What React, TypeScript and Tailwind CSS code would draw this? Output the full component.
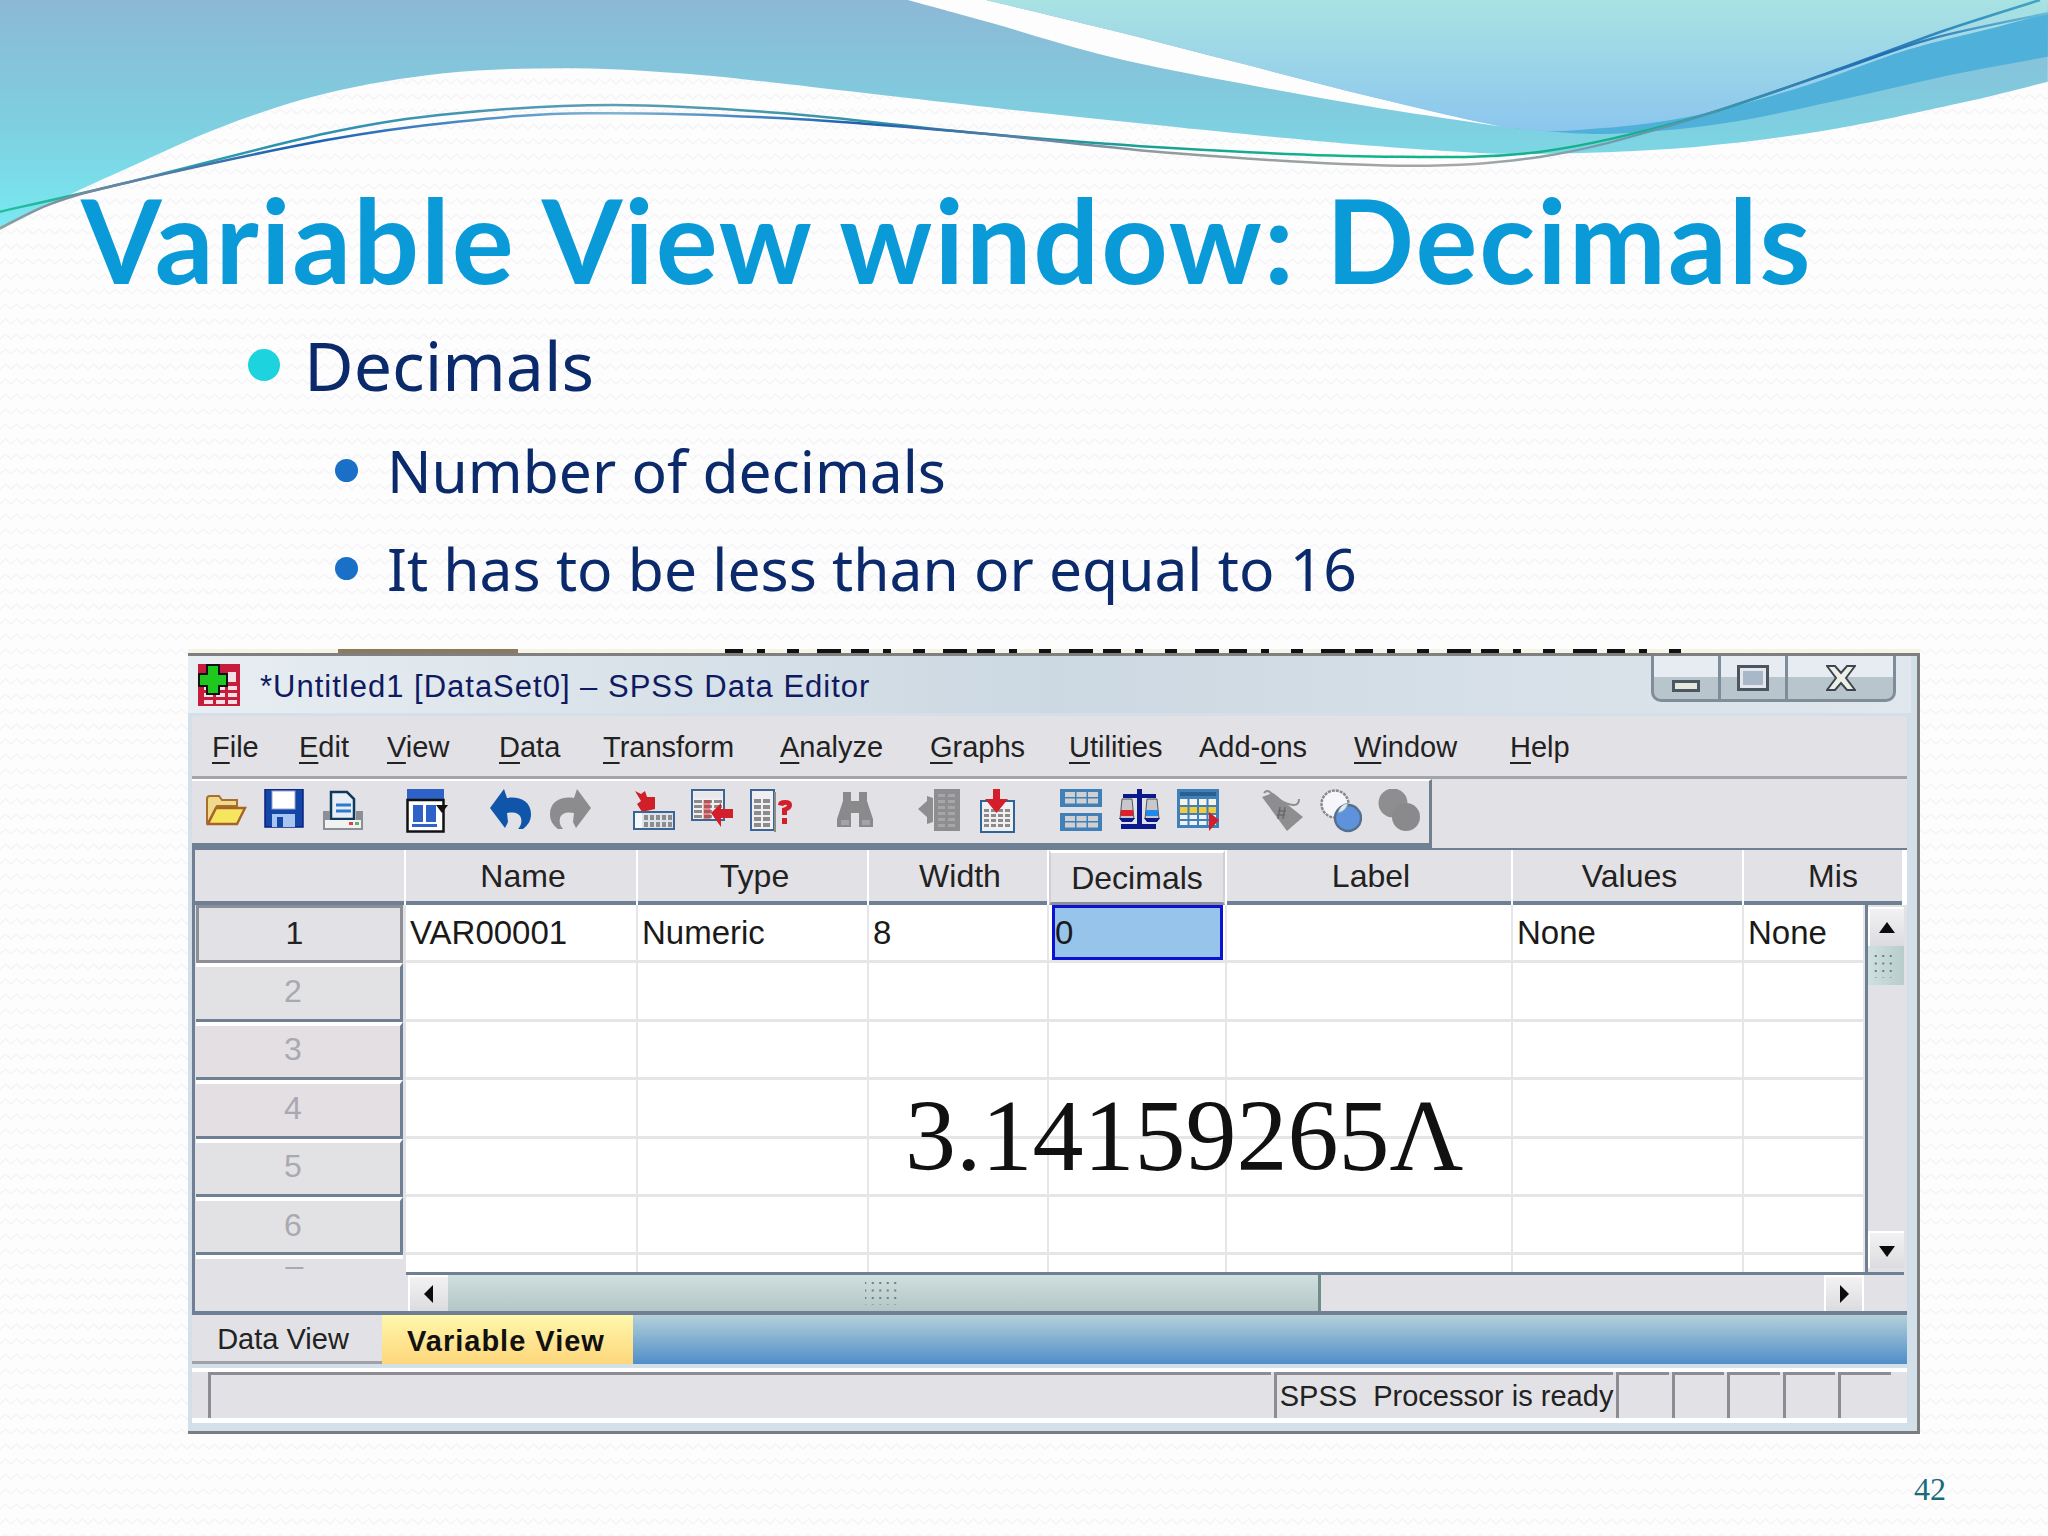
import type { ReactNode } from "react"

const Z = (pts: number[][]) => pts.map(([x, y]) => [x * 1.306, y / 3])

// catmull-rom through the traced points
function smooth(pts: number[][]) {
  let d = ""
  for (let i = 0; i < pts.length - 1; i++) {
    const p0 = pts[Math.max(i - 1, 0)]
    const p1 = pts[i]
    const p2 = pts[i + 1]
    const p3 = pts[Math.min(i + 2, pts.length - 1)]
    const c1 = [p1[0] + (p2[0] - p0[0]) / 6, p1[1] + (p2[1] - p0[1]) / 6]
    const c2 = [p2[0] - (p3[0] - p1[0]) / 6, p2[1] - (p3[1] - p1[1]) / 6]
    d += (i === 0 ? "M" + p1[0] + " " + p1[1] : "") + "C" + c1.join(" ") + " " + c2.join(" ") + " " + p2.join(" ")
  }
  return d
}

const waveEdge = Z([[0,690],[50,590],[100,500],[170,380],[250,280],[340,220],[430,205],[520,220],[620,260],[800,340],[1000,420],[1130,458],[1200,460],[1300,440],[1400,390],[1500,310],[1568,245]])
const streakA = Z([[695,0],[760,70],[850,170],[950,250],[1050,320],[1150,380]])
const streakB = Z([[1150,380],[1050,290],[950,190],[850,90],[755,0]])
const lightEdge = Z([[755,0],[850,90],[950,190],[1050,290],[1160,385],[1225,385],[1300,345],[1380,260],[1460,150],[1530,80],[1568,40]])
const bandEdge = Z([[1160,385],[1230,402],[1320,370],[1420,290],[1500,220],[1568,170]])
const lineA = Z([[0,635],[100,545],[250,400],[350,340],[470,315],[600,340],[750,400],[900,445],[1060,470],[1180,455],[1300,350],[1420,190],[1490,90],[1562,0]])
const lineB = Z([[0,685],[40,610],[100,545],[250,420],[350,365],[450,340],[600,355],[750,400],[900,460],[1070,497],[1180,470],[1280,375],[1400,220],[1480,115],[1568,40]])

function Background() {
  return (
    <svg className="absolute inset-0 h-[1536px] w-[2048px]" viewBox="0 0 2048 1536">
      <defs>
        <linearGradient id="main" x1="0" y1="0" x2="0" y2="232" gradientUnits="userSpaceOnUse">
          <stop offset="0" stopColor="#8cb8d6" />
          <stop offset="0.55" stopColor="#7ed0e0" />
          <stop offset="1" stopColor="#78eaf3" />
        </linearGradient>
        <linearGradient id="light" x1="0" y1="0" x2="0" y2="130" gradientUnits="userSpaceOnUse">
          <stop offset="0" stopColor="#a9e2e2" />
          <stop offset="1" stopColor="#8cc6ee" />
        </linearGradient>
        <linearGradient id="strokeA" x1="0" y1="0" x2="2048" y2="0" gradientUnits="userSpaceOnUse">
          <stop offset="0" stopColor="#1fbf97" />
          <stop offset="0.15" stopColor="#2b8fb0" />
          <stop offset="0.3" stopColor="#5f9db4" />
          <stop offset="0.48" stopColor="#1f8f9f" />
          <stop offset="0.65" stopColor="#12b48a" />
          <stop offset="0.83" stopColor="#14b08e" />
          <stop offset="0.9" stopColor="#1f70b4" />
          <stop offset="1" stopColor="#43a8c8" />
        </linearGradient>
        <linearGradient id="strokeB" x1="0" y1="0" x2="2048" y2="0" gradientUnits="userSpaceOnUse">
          <stop offset="0" stopColor="#9a9a9a" />
          <stop offset="0.15" stopColor="#1a5fb4" />
          <stop offset="0.3" stopColor="#7fb4d2" />
          <stop offset="0.42" stopColor="#1c5fb0" />
          <stop offset="0.56" stopColor="#8f9a9c" />
          <stop offset="0.72" stopColor="#a8a8a8" />
          <stop offset="0.85" stopColor="#3f8fb0" />
          <stop offset="0.92" stopColor="#1f6ab4" />
          <stop offset="1" stopColor="#6cbcd4" />
        </linearGradient>
        <pattern id="zig" width="11" height="15" patternUnits="userSpaceOnUse">
          <path d="M0 9 L5.5 4 L11 9" fill="none" stroke="#f3f3f5" strokeWidth="1.2" />
        </pattern>
      </defs>
      <rect width="2048" height="1536" fill="#fdfdfe" />
      <rect width="2048" height="1536" fill="url(#zig)" />
      <path d={smooth(waveEdge) + "L2048 0L0 0Z"} fill="url(#main)" />
      <path d={smooth(bandEdge) + "L2048 0L1515 0Z"} fill="#4fb0da" />
      <path d={smooth(streakA) + smooth(streakB).replace("M", "L") + "Z"} fill="#fdfdfe" />
      <path d={smooth(lightEdge) + "L2048 0Z"} fill="url(#light)" />
      <path d={smooth(lineA)} fill="none" stroke="url(#strokeA)" strokeWidth="2.5" />
      <path d={smooth(lineB)} fill="none" stroke="url(#strokeB)" strokeWidth="2.5" />
    </svg>
  )
}

function Ico({ children }: { children: ReactNode }) {
  return (
    <svg className="h-[44px] w-[42px] shrink-0" viewBox="0 0 42 44">
      {children}
    </svg>
  )
}

// little spreadsheet used by several toolbar icons
function Cells({ x, y, cols, rows, w, h, fill, gap = 2 }: { x: number; y: number; cols: number; rows: number; w: number; h: number; fill: string; gap?: number }) {
  const out = []
  for (let r = 0; r < rows; r++) {
    for (let c = 0; c < cols; c++) {
      out.push(<rect key={r + "-" + c} x={x + c * (w + gap)} y={y + r * (h + gap)} width={w} height={h} fill={fill} />)
    }
  }
  return <>{out}</>
}

const Folder = () => (
  <Ico>
    <path d="M2 34V10q0-3 3-3h9l3 4h15v6H12L3 34Z" fill="#f0d98a" stroke="#a8702c" strokeWidth="2" />
    <path d="M3 35l8-16h29l-8 16Z" fill="#f6e65e" stroke="#a8622c" strokeWidth="2.4" />
  </Ico>
)
const Save = () => (
  <Ico>
    <rect x="1" y="0" width="38" height="38" fill="#1247a8" stroke="#0c1f80" strokeWidth="1.5" />
    <rect x="8" y="2" width="23" height="18" fill="#fff" stroke="#9aa4c8" />
    <rect x="8" y="25" width="23" height="13" fill="#a8c4f0" />
    <rect x="13" y="28" width="6" height="10" fill="#1247a8" />
  </Ico>
)
const Print = () => (
  <Ico>
    <path d="M9 3h16l7 7v20H9Z" fill="#e8eef6" stroke="#103a5c" strokeWidth="2.5" />
    <path d="M14 16h15M14 22h15" stroke="#2a78d4" strokeWidth="3" />
    <path d="M1 22h7v10h26V22h7v19H1Z" fill="#8a9096" />
    <rect x="3" y="31" width="36" height="8" fill="#f2f2f0" />
    <rect x="27" y="33" width="4" height="3" fill="#e04040" />
    <rect x="33" y="33" width="4" height="3" fill="#60b070" />
  </Ico>
)
const GoTo = () => (
  <Ico>
    <rect x="1" y="0" width="37" height="11" fill="#2f62c8" />
    <rect x="1.5" y="11" width="36" height="31.5" fill="#fff" stroke="#111" strokeWidth="2.5" />
    <rect x="7" y="16" width="10" height="17" fill="#2f62c8" />
    <rect x="20" y="16" width="10" height="17" fill="#2f62c8" />
    <rect x="6" y="35" width="25" height="3" fill="#2f62c8" />
    <path d="M30 16h12l-6 8Z" fill="#111" />
  </Ico>
)
const arrowPath = "M0 19 14 0l3 9c12-2 24 3 24 16 0 7-3 11-8 15h-5c3-3 4-7 3-11-2-6-9-6-14-5l1 9-3 6Z"
const Undo = () => (
  <Ico>
    <path d={arrowPath} fill="#0f56ab" />
  </Ico>
)
const Redo = () => (
  <Ico>
    <g transform="translate(42 0) scale(-1 1)">
      <path d={arrowPath} fill="#8c8c8e" />
    </g>
  </Ico>
)
const InsertCases = () => (
  <Ico>
    <path d="M2 2l6 3 4-3 2 6h8v12l-13 3-5-8 4-3Z" fill="#cf1f27" />
    <rect x="1" y="23" width="40" height="17" fill="#dde3ea" stroke="#3c6494" strokeWidth="2" />
    <rect x="2" y="24" width="7" height="15" fill="#f4f8fc" />
    <Cells x={11} y={26} cols={5} rows={2} w={4} h={5} fill="#8c8c8c" gap={2} />
  </Ico>
)
const InsertVar = () => (
  <Ico>
    <rect x="1" y="1" width="32" height="30" fill="#f0f0f2" stroke="#3c6494" strokeWidth="2" />
    <rect x="3" y="3" width="28" height="6" fill="#e8e8ea" />
    <Cells x={3} y={11} cols={3} rows={4} w={8} h={3} fill="#8c8c8c" gap={2} />
    <rect x="12.5" y="11" width="7" height="19" fill="#cf1f27" opacity="0.5" />
    <path d="M20 24 30 14v6h12v9H30v9Z" fill="#d31f2c" />
  </Ico>
)
const Variables = () => (
  <Ico>
    <rect x="1" y="1" width="23" height="40" fill="#f0f0f2" stroke="#3c6494" strokeWidth="2" />
    <rect x="24" y="3" width="2" height="40" fill="#8c8c8c" />
    <Cells x={4} y={10} cols={2} rows={5} w={7} h={4} fill="#8c8c8c" gap={2} />
    <path d="M28 16q0-5 7-5t7 5q0 4-5 6v4h-5v-7q5-1 5-3-2-1-4 1Z" fill="#d31f2c" />
    <rect x="32" y="29" width="5" height="6" fill="#d31f2c" />
  </Ico>
)
const Binoculars = () => (
  <Ico>
    <path d="M9 3h8v9h8V3h8v9l6 18v8H25V24h-8v14H3v-8L9 12Z" fill="#8a8a8c" />
    <rect x="7" y="31" width="8" height="5" fill="#a4a4a6" />
    <rect x="28" y="31" width="8" height="5" fill="#a4a4a6" />
  </Ico>
)
const GoCase = () => (
  <Ico>
    <rect x="16" y="0" width="26" height="42" fill="#8e8e90" />
    <Cells x={20} y={5} cols={2} rows={6} w={7} h={3} fill="#a6a6a8" gap={3} />
    <path d="M0 20 9 12v-5l6 2v24l-6 2v-7Z" fill="#8e8e90" />
  </Ico>
)
const GoVar = () => (
  <Ico>
    <rect x="5" y="12" width="33" height="31" fill="#f0f0f2" stroke="#2f6494" strokeWidth="2" />
    <Cells x={8} y={20} cols={4} rows={4} w={5} h={3} fill="#8c8c8c" gap={2} />
    <path d="M17 0h7v10h8L20.5 24 9 10h8Z" fill="#d31f2c" />
  </Ico>
)
const Split = () => (
  <Ico>
    <rect x="0" y="0" width="42" height="18" fill="#3f80b8" />
    <Cells x={5} y={3} cols={3} rows={2} w={10} h={5} fill="#d0d0d2" gap={1.5} />
    <rect x="0" y="24" width="42" height="18" fill="#3f80b8" />
    <Cells x={5} y={27} cols={3} rows={2} w={10} h={5} fill="#d0d0d2" gap={1.5} />
  </Ico>
)
const Scale = () => (
  <Ico>
    <path d="M18 0h5v5h14v4H23v26h14v5H2v-5h16V9H4V5h14Z" fill="#0a1a8c" />
    <path d="M3 10h10l2 20H1Z" fill="#c8c8cc" stroke="#555" />
    <path d="M28 10h10l2 20H26Z" fill="#c8c8cc" stroke="#555" />
    <rect x="2" y="21" width="12" height="6" fill="#e01f2c" />
    <rect x="27" y="21" width="12" height="6" fill="#2088e8" />
    <path d="M0 29h16l-3 4H3ZM25 29h16l-3 4H28Z" fill="#0a1a8c" />
  </Ico>
)
const ValueTable = () => (
  <Ico>
    <rect x="0" y="0" width="42" height="39" fill="#3f80b8" />
    <rect x="3" y="3" width="36" height="4" fill="#2a5f94" />
    <Cells x={3} y={10} cols={4} rows={1} w={7.5} h={6} fill="#f4f4e8" />
    <Cells x={3} y={18} cols={4} rows={1} w={7.5} h={6} fill="#f2cc3c" />
    <Cells x={3} y={26} cols={4} rows={2} w={7.5} h={4} fill="#eef2f6" />
    <path d="M32 23 42 31 32 42Z" fill="#d01f2c" />
  </Ico>
)
const Tag = () => (
  <Ico>
    <path d="M1 8 12 4 42 28 26 42Z" fill="#8e8e90" />
    <path d="M3 4q3-4 7 0 5 3 10 8 8 4 13 4t5-6" fill="none" stroke="#8e8e90" strokeWidth="2" />
    <path d="M17 22h8M16 26h8M19 18l-2 12M24 18l-2 12" stroke="#6a6a6c" strokeWidth="1.5" />
  </Ico>
)
const Circles = () => (
  <Ico>
    <circle cx="15" cy="15" r="13.5" fill="#f6f6fa" stroke="#888" strokeWidth="2.4" strokeDasharray="3 1" />
    <circle cx="28" cy="29" r="13" fill="#5f92dc" stroke="#54708c" strokeWidth="2.4" />
    <path d="M18 24a13 13 0 0 1 10-10 13 13 0 0 1-10 10Z" fill="#dfe8f4" stroke="#8aa" />
  </Ico>
)
const GrayCircles = () => (
  <Ico>
    <circle cx="15" cy="14" r="14.5" fill="#8e8e90" />
    <circle cx="28" cy="28" r="14" fill="#8a8a8c" />
  </Ico>
)

const toolGroups = [
  [Folder, Save, Print],
  [GoTo],
  [Undo, Redo],
  [InsertCases, InsertVar, Variables],
  [Binoculars],
  [GoCase, GoVar],
  [Split, Scale, ValueTable],
  [Tag, Circles, GrayCircles],
]

const menus = [
  { k: "F", r: "ile", w: "w-[87px]" },
  { k: "E", r: "dit", w: "w-[88px]" },
  { k: "V", r: "iew", w: "w-[112px]" },
  { k: "D", r: "ata", w: "w-[104px]" },
  { k: "T", r: "ransform", w: "w-[177px]" },
  { k: "A", r: "nalyze", w: "w-[150px]" },
  { k: "G", r: "raphs", w: "w-[139px]" },
  { k: "U", r: "tilities", w: "w-[130px]" },
]

const headers = ["", "Name", "Type", "Width", "Decimals", "Label", "Values", "Mis"]
const rowNumbers = ["1", "2", "3", "4", "5", "6"]
const rowText = ["VAR00001", "Numeric", "8", "", "", "None", "None"]

function Dots({ cols = 5 }: { cols?: number }) {
  return (
    <svg className="h-[24px] w-[36px]" viewBox="0 0 36 24">
      <Cells x={(36 - cols * 7.5) / 2} y={1} cols={cols} rows={4} w={2} h={2} fill="#6f7f80" gap={5.5} />
    </svg>
  )
}

function ScrollButton({ dir, className }: { dir: "up" | "down" | "left" | "right"; className: string }) {
  const d = { up: "M1 14 9 3l8 11Z", down: "M1 4h16L9 15Z", left: "M13 0v18L4 9Z", right: "M5 0v18l9-9Z" }[dir]
  return (
    <div className={"flex shrink-0 items-center justify-center border-t-2 border-l-2 border-white bg-linear-to-b from-[#f2f2f4] to-[#dcdce0] " + className}>
      <svg className="h-[18px] w-[18px]" viewBox="0 0 18 18">
        <path d={d} fill="#0c0c0c" />
      </svg>
    </div>
  )
}

function CaptionButtons() {
  return (
    <div className="flex h-[46px] w-[245px] shrink-0 self-start overflow-hidden rounded-b-[10px] border-x-[3px] border-b-[3px] border-[#7f8d9a] bg-linear-to-b from-[#e6ecf1] from-50% to-[#b9c5cd] to-50%">
      <div className="flex w-[64px] items-end justify-center pb-[7px]">
        <div className="h-[12px] w-[28px] border-[3px] border-[#4c5660] bg-[#e6e8e0]" />
      </div>
      <div className="flex w-[67px] items-start justify-center border-l-[3px] border-[#7f8d9a] pt-[9px]">
        <div className="h-[26px] w-[32px] border-[3px] border-[#4c5660] bg-[#e4e8ec] p-[3px]">
          <div className="h-full w-full bg-[#a8b8c8]" />
        </div>
      </div>
      <div className="flex flex-1 items-start justify-center border-l-[3px] border-[#7f8d9a] pt-[9px]">
        <svg className="h-[26px] w-[30px]" viewBox="0 0 30 26">
          <path d="M1 1h8l6 7 6-7h8l-9 12 9 12h-8l-6-7-6 7H1l9-12Z" fill="#eef0e8" stroke="#3c4650" strokeWidth="2" />
        </svg>
      </div>
    </div>
  )
}

export default function App() {
  return (
    <div className="relative h-[1536px] w-[2048px] overflow-hidden font-['Liberation_Sans',Arial,sans-serif]">
      <Background />
      <div className="relative flex h-full flex-col">
        <h1 className="mt-[172px] ml-[81px] h-[136px] font-['Lato',sans-serif] text-[116px] leading-[136px] font-bold tracking-[2px] whitespace-nowrap text-[#0a9ad8]">
          Variable View window: Decimals
        </h1>

        <div className="mt-[14px] ml-[248px] flex items-center gap-[24px] font-['Noto_Sans',sans-serif] text-[68px] leading-[86px] text-[#0b2a6c]">
          <span className="h-[32px] w-[32px] rounded-full bg-[#1dd3dd]" />
          Decimals
        </div>
        <div className="mt-[21px] ml-[335px] flex items-center gap-[29px] font-['Noto_Sans',sans-serif] text-[58.7px] leading-[82px] text-[#0b2a6c]">
          <span className="h-[23px] w-[23px] rounded-full bg-[#1a6fc6]" />
          Number of decimals
        </div>
        <div className="mt-[16px] ml-[335px] flex items-center gap-[29px] font-['Noto_Sans',sans-serif] text-[58.7px] leading-[82px] text-[#0b2a6c]">
          <span className="h-[23px] w-[23px] rounded-full bg-[#1a6fc6]" />
          It has to be less than or equal to 16
        </div>

        <div className="relative mt-[40px] ml-[188px] flex h-[785px] w-[1732px] flex-col border-r-[3px] border-b-[3px] border-[#7d7d7d] bg-[#d3dfe9] pr-[10px] pb-[8px] pl-[4px]">
          <svg className="-ml-[4px] h-[7px] w-[1732px] shrink-0" viewBox="0 0 1732 7">
            <rect x="0" y="0" width="1732" height="4" fill="#f6f4e8" />
            <rect x="150" y="0" width="180" height="4" fill="#8c7a5c" />
            <path d="M537 2H1496" stroke="#111" strokeWidth="4" strokeDasharray="18 14 8 22 12 18 24 10" />
            <rect x="0" y="4" width="1732" height="3" fill="#808080" />
          </svg>

          <div className="-mx-[4px] flex h-[57px] shrink-0 items-center bg-linear-to-r from-[#e8eef2] via-[#ccd8e2] to-[#e0e7ed] pr-[15px] pl-[10px]">
            <svg className="h-[42px] w-[42px] shrink-0" viewBox="0 0 42 42">
              <rect width="42" height="42" fill="#c81c3c" />
              <Cells x={6} y={22} cols={3} rows={3} w={9} h={4} fill="#f4dfe4" gap={3} />
              <rect x="30" y="8" width="8" height="10" fill="#f4dfe4" />
              <path d="M9 1h12v9h8v12h-8v8H9v-8H1V10h8Z" fill="#1fc81f" stroke="#111" strokeWidth="2" />
            </svg>
            <span className="ml-[20px] flex-1 pt-[5px] text-[31px] tracking-[1px] whitespace-nowrap text-[#101a60]">*Untitled1 [DataSet0] – SPSS Data Editor</span>
            <CaptionButtons />
          </div>

          <div className="mt-[3px] flex h-[63px] shrink-0 items-center rounded-t-[3px] border-b-[3px] border-[#a4a4aa] bg-[#e2e1e5] pt-[4px] pl-[20px] text-[29px] text-[#222]">
            {menus.map((m) => (
              <span key={m.k} className={m.w}>
                <span className="underline decoration-2 underline-offset-[5px]">{m.k}</span>
                {m.r}
              </span>
            ))}
            <span className="w-[155px]">
              Add-<span className="underline decoration-2 underline-offset-[5px]">o</span>ns
            </span>
            <span className="w-[156px]">
              <span className="underline decoration-2 underline-offset-[5px]">W</span>indow
            </span>
            <span>
              <span className="underline decoration-2 underline-offset-[5px]">H</span>elp
            </span>
          </div>

          <div className="flex h-[69px] shrink-0 bg-[#e2e1e5]">
            <div className="flex h-[69px] w-[1240px] gap-[42px] border-t-[2px] border-r-[3px] border-b-[5px] border-t-white border-r-[#71808f] border-b-[#6f7f94] pt-[8px] pl-[13px]">
              {toolGroups.map((group, i) => (
                <div key={i} className="flex gap-[16.5px]">
                  {group.map((Icon, j) => (
                    <Icon key={j} />
                  ))}
                </div>
              ))}
            </div>
          </div>

          <div className="grid h-[57px] shrink-0 grid-cols-[211px_232px_231px_180px_178px_286px_231px_160px] border-t-[2px] border-l-[3px] border-[#6f7f94] bg-white text-[32px] text-[#222]">
            {headers.map((h, i) => (
              <div
                key={i}
                className={
                  h === "Decimals"
                    ? "mr-[2px] flex items-center justify-center border-x-2 border-t-[3px] border-b-[3px] border-x-[#d0d0d4] border-t-white border-b-[#8c8f96] bg-[#e2e1e5]"
                    : h === "Mis"
                      ? "mr-[2px] flex items-center justify-center border-b-[4px] border-[#6f7f94] bg-[#e2e1e5] pl-[20px]"
                      : "mr-[2px] flex items-center justify-center border-b-[4px] border-[#6f7f94] bg-[#e2e1e5] pl-[4px]"
                }
              >
                {h}
              </div>
            ))}
          </div>

          <div className="flex h-[410px] shrink-0 border-b-[4px] border-l-[3px] border-[#6f7f94] bg-[#e2e1e5]">
            <div className="flex w-[211px] shrink-0 flex-col pr-[3px] pl-[1px] text-[32px]">
              {rowNumbers.map((n, i) => (
                <div
                  key={n}
                  className={
                    i === 0
                      ? "flex h-[58.4px] shrink-0 items-center justify-center border-[3px] border-[#8d8f96] bg-[#e2e1e5] pr-[10px] pb-[2px] text-[#222]"
                      : i === 2 || i === 3
                        ? "flex h-[58.4px] shrink-0 items-center justify-center border-t-[4px] border-r-[3px] border-b-[3px] border-t-white border-r-[#6f7f94] border-b-[#6f7f94] bg-[#e3dfe3] pr-[10px] pb-[4px] text-[#a9a9b0]"
                        : "flex h-[58.4px] shrink-0 items-center justify-center border-t-[4px] border-r-[3px] border-b-[3px] border-t-white border-r-[#6f7f94] border-b-[#6f7f94] bg-[#e2e2e5] pr-[10px] pb-[4px] text-[#a9a9b0]"
                  }
                >
                  {n}
                </div>
              ))}
              <div className="flex flex-1 justify-center border-t-[4px] border-t-white pr-[10px] text-[#a9a9b0]">
                <span className="leading-[12px]">–</span>
              </div>
            </div>

            <div className="flex w-[1498px] flex-col">
              <div className="flex h-[367px] shrink-0">
                <div className="grid w-[1459px] auto-rows-[58.4px] grid-cols-[232px_231px_180px_178px_286px_231px_121px] overflow-hidden bg-white text-[33px] text-[#1a1a1a]">
                  {rowNumbers.concat("7").map((_, r) =>
                    rowText.map((t, c) => (
                      <div key={r + "-" + c} className="flex items-center border-r-2 border-b-[3px] border-[#e6e6e8] pl-[4px]">
                        {r === 0 && c === 3 ? (
                          <div className="-ml-[1px] flex h-[55px] w-[171px] items-center border-[3px] border-[#0b12d4] bg-[#97c4ea]">0</div>
                        ) : r === 0 ? (
                          t
                        ) : null}
                      </div>
                    )),
                  )}
                </div>
                <div className="flex w-[39px] shrink-0 flex-col border-l-[3px] border-[#6f7f94] bg-[#e2e1e5]">
                  <ScrollButton dir="up" className="mt-[2px] h-[39px]" />
                  <div className="flex h-[39px] shrink-0 items-center justify-center overflow-hidden bg-linear-to-r from-[#cfe0e0] to-[#b9cccc]">
                    <Dots cols={3} />
                  </div>
                  <div className="flex-1" />
                  <ScrollButton dir="down" className="mb-[4px] h-[37px]" />
                </div>
              </div>
              <div className="flex h-[39px] shrink-0 border-t-[3px] border-[#6f7f94] bg-[#e2e1e5]">
                <ScrollButton dir="left" className="ml-[2px] w-[40px]" />
                <div className="flex w-[873px] shrink-0 items-center justify-center border-r-[3px] border-r-[#6f8c8c] bg-linear-to-b from-[#d0dfe0] to-[#b4c6c5]">
                  <Dots />
                </div>
                <div className="flex-1" />
                <ScrollButton dir="right" className="w-[38px]" />
                <div className="w-[42px] border-l-2 border-white" />
              </div>
            </div>
          </div>

          <div className="flex h-[49px] shrink-0 bg-linear-to-b from-[#b4d0d8] to-[#4f8fc8] text-[29px]">
            <div className="flex w-[190px] items-center justify-center border-b-[3px] border-[#a0a0a6] bg-[#e2e1e5] pt-[4px] pr-[8px] text-[#222]">Data View</div>
            <div className="flex w-[251px] items-center justify-center bg-linear-to-b from-[#fff8ac] to-[#fdd67a] pt-[4px] pr-[3px] font-bold tracking-[1px] text-[#111]">Variable View</div>
          </div>

          <div className="mt-[4px] flex h-[55px] shrink-0 gap-[3px] border-t-[4px] border-b-[5px] border-white bg-[#e2e1e5] px-[16px] text-[29px] whitespace-pre text-[#222]">
            <div className="w-[1073px] border-t-[3px] border-l-[3px] border-[#8c8c92]" />
            <div className="flex w-[342px] items-center border-t-[3px] border-l-[3px] border-[#8c8c92] pl-[3px]">SPSS  Processor is ready</div>
            <div className="w-[53px] border-t-[3px] border-l-[3px] border-[#8c8c92]" />
            <div className="w-[53px] border-t-[3px] border-l-[3px] border-[#8c8c92]" />
            <div className="w-[53px] border-t-[3px] border-l-[3px] border-[#8c8c92]" />
            <div className="w-[53px] border-t-[3px] border-l-[3px] border-[#8c8c92]" />
            <div className="w-[53px] border-t-[3px] border-l-[3px] border-[#8c8c92]" />
          </div>

          <div className="absolute top-[427px] left-[717px] font-['Liberation_Serif',serif] text-[102px] leading-[120px] whitespace-nowrap text-[#111]">
            3.14159265Λ
          </div>
        </div>

        <div className="mt-[39px] flex justify-end pr-[102px] font-['Liberation_Serif',serif] text-[32px] leading-[32px] text-[#1a6a7c]">42</div>
      </div>
    </div>
  )
}
